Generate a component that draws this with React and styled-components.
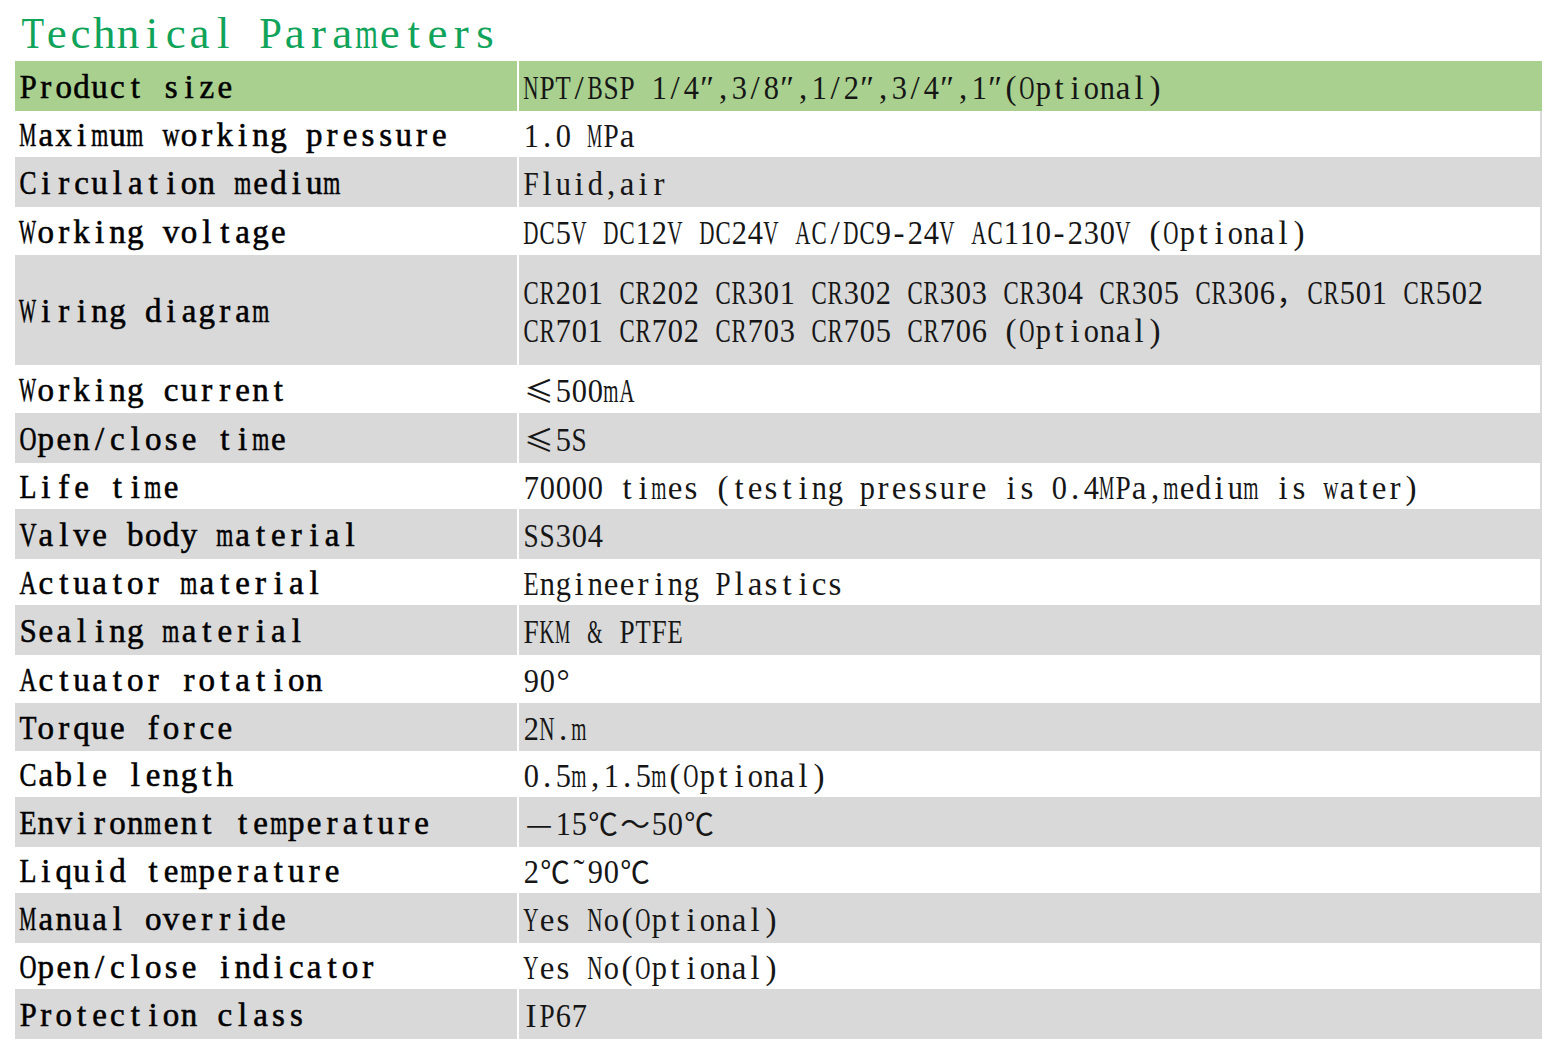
import React from 'react';
import styled, { createGlobalStyle } from 'styled-components';

const GlobalStyle = createGlobalStyle`
  html, body {
    margin: 0;
    padding: 0;
    background: #fff;
  }
  body {
    overflow: hidden;
  }
`;

const SERIF = '"Liberation Serif", "Noto Sans CJK SC", serif';
const CJK = '"Noto Sans CJK SC", "Liberation Serif", sans-serif';
// full-width symbols take two cells, like in a CJK font
const WIDE = '≤—～℃，';

let ctx = null;
const measure = (ch, font) => {
  if (!ctx) ctx = document.createElement('canvas').getContext('2d');
  ctx.font = font;
  return ctx.measureText(ch).width;
};

const Page = styled.div`
  width: 1558px;
  height: 1054px;
  box-sizing: border-box;
  padding-left: 15px;
  background: #fff;
`;

const Title = styled.h1`
  margin: 0;
  height: 61px;
  box-sizing: border-box;
  padding: 11px 0 0 6px;
  line-height: 1;
  color: #10a35a;
`;

// monospaced run: every char sits in a fixed cell, squeezed if wider
const Run = styled.span`
  display: flex;
  align-items: baseline;
  white-space: pre;
  font-family: ${SERIF};
  font-size: ${(p) => p.$size}px;
  font-weight: ${(p) => p.$weight};
  -webkit-text-stroke: ${(p) => p.$stroke}px currentColor;
`;

const Ch = styled.span`
  display: inline-flex;
  justify-content: center;
  flex: none;
  width: ${(p) => p.$w}px;
  font-family: ${(p) => (p.$wide ? CJK : 'inherit')};
  font-size: ${(p) => (p.$wide ? '0.9em' : 'inherit')};
  line-height: inherit;
`;

const Glyph = styled.span`
  display: inline-block;
  transform-origin: 50% 50%;
`;

const Mono = ({ text, cell, size, weight = 400, stroke = 0 }) => (
  <Run $size={size} $weight={weight} $stroke={stroke}>
    {[...text].map((ch, i) => {
      const wide = WIDE.includes(ch);
      const w = wide ? cell * 2 : cell;
      if (ch === ' ') return <Ch key={i} $w={w}>{'\u00a0'}</Ch>;
      const fs = wide ? size * 0.9 : size;
      const adv = measure(ch, `${weight} ${fs}px ${wide ? CJK : SERIF}`);
      const max = w * 0.95;
      const s = adv > max ? max / adv : 1;
      return (
        <Ch key={i} $w={w} $wide={wide}>
          <Glyph style={s < 1 ? { transform: `scaleX(${s.toFixed(3)})` } : undefined}>{ch}</Glyph>
        </Ch>
      );
    })}
  </Run>
);

const Table = styled.div`
  display: flex;
  flex-direction: column;
`;

const tones = {
  green: '#a9d08e',
  gray: '#d9d9d9',
  white: '#ffffff',
};

const Row = styled.div`
  display: grid;
  grid-template-columns: 502px 1023px;
  column-gap: 2px;
  height: ${(p) => p.$h}px;
`;

const Cell = styled.div`
  display: flex;
  align-items: center;
  box-sizing: border-box;
  background: ${(p) => tones[p.$tone]};
  padding-top: 3px;
  padding-left: 4px;
`;

const LabelCell = styled(Cell)`
  line-height: 1;
  color: #000;
`;

const ValueCell = styled(Cell)`
  line-height: 38px;
  color: #161616;
  border-right: ${(p) => (p.$tone === 'white' ? '2px solid #d9d9d9' : 'none')};
`;

const Lines = styled.div`
  display: flex;
  flex-direction: column;
`;

const rows = [
  { label: 'Product size', value: ['NPT/BSP 1/4″,3/8″,1/2″,3/4″,1″(Optional)'], h: 50, tone: 'green' },
  { label: 'Maximum working pressure', value: ['1.0 MPa'], h: 46, tone: 'white' },
  { label: 'Circulation medium', value: ['Fluid,air'], h: 50, tone: 'gray' },
  { label: 'Working voltage', value: ['DC5V DC12V DC24V AC/DC9-24V AC110-230V (Optional)'], h: 48, tone: 'white' },
  {
    label: 'Wiring diagram',
    value: [
      'CR201 CR202 CR301 CR302 CR303 CR304 CR305 CR306，CR501 CR502',
      'CR701 CR702 CR703 CR705 CR706 (Optional)',
    ],
    h: 110,
    tone: 'gray',
  },
  { label: 'Working current', value: ['≤500mA'], h: 48, tone: 'white' },
  { label: 'Open/close time', value: ['≤5S'], h: 50, tone: 'gray' },
  { label: 'Life time', value: ['70000 times (testing pressure is 0.4MPa,medium is water)'], h: 46, tone: 'white' },
  { label: 'Valve body material', value: ['SS304'], h: 50, tone: 'gray' },
  { label: 'Actuator material', value: ['Engineering Plastics'], h: 46, tone: 'white' },
  { label: 'Sealing material', value: ['FKM & PTFE'], h: 50, tone: 'gray' },
  { label: 'Actuator rotation', value: ['90°'], h: 48, tone: 'white' },
  { label: 'Torque force', value: ['2N.m'], h: 48, tone: 'gray' },
  { label: 'Cable length', value: ['0.5m,1.5m(Optional)'], h: 46, tone: 'white' },
  { label: 'Environment temperature', value: ['—15℃～50℃'], h: 50, tone: 'gray' },
  { label: 'Liquid temperature', value: ['2℃˜90℃'], h: 46, tone: 'white' },
  { label: 'Manual override', value: ['Yes No(Optional)'], h: 50, tone: 'gray' },
  { label: 'Open/close indicator', value: ['Yes No(Optional)'], h: 46, tone: 'white' },
  { label: 'Protection class', value: ['IP67'], h: 50, tone: 'gray' },
];

export default function App() {
  return (
    <Page>
      <GlobalStyle />
      <Title>
        <Mono text="Technical Parameters" cell={23.8} size={45} />
      </Title>
      <Table>
        {rows.map((r) => (
          <Row key={r.label} $h={r.h}>
            <LabelCell $tone={r.tone}>
              <Mono text={r.label} cell={17.9} size={33} stroke={0.55} />
            </LabelCell>
            <ValueCell $tone={r.tone}>
              <Lines>
                {r.value.map((line) => (
                  <Mono key={line} text={line} cell={16} size={33} />
                ))}
              </Lines>
            </ValueCell>
          </Row>
        ))}
      </Table>
    </Page>
  );
}
